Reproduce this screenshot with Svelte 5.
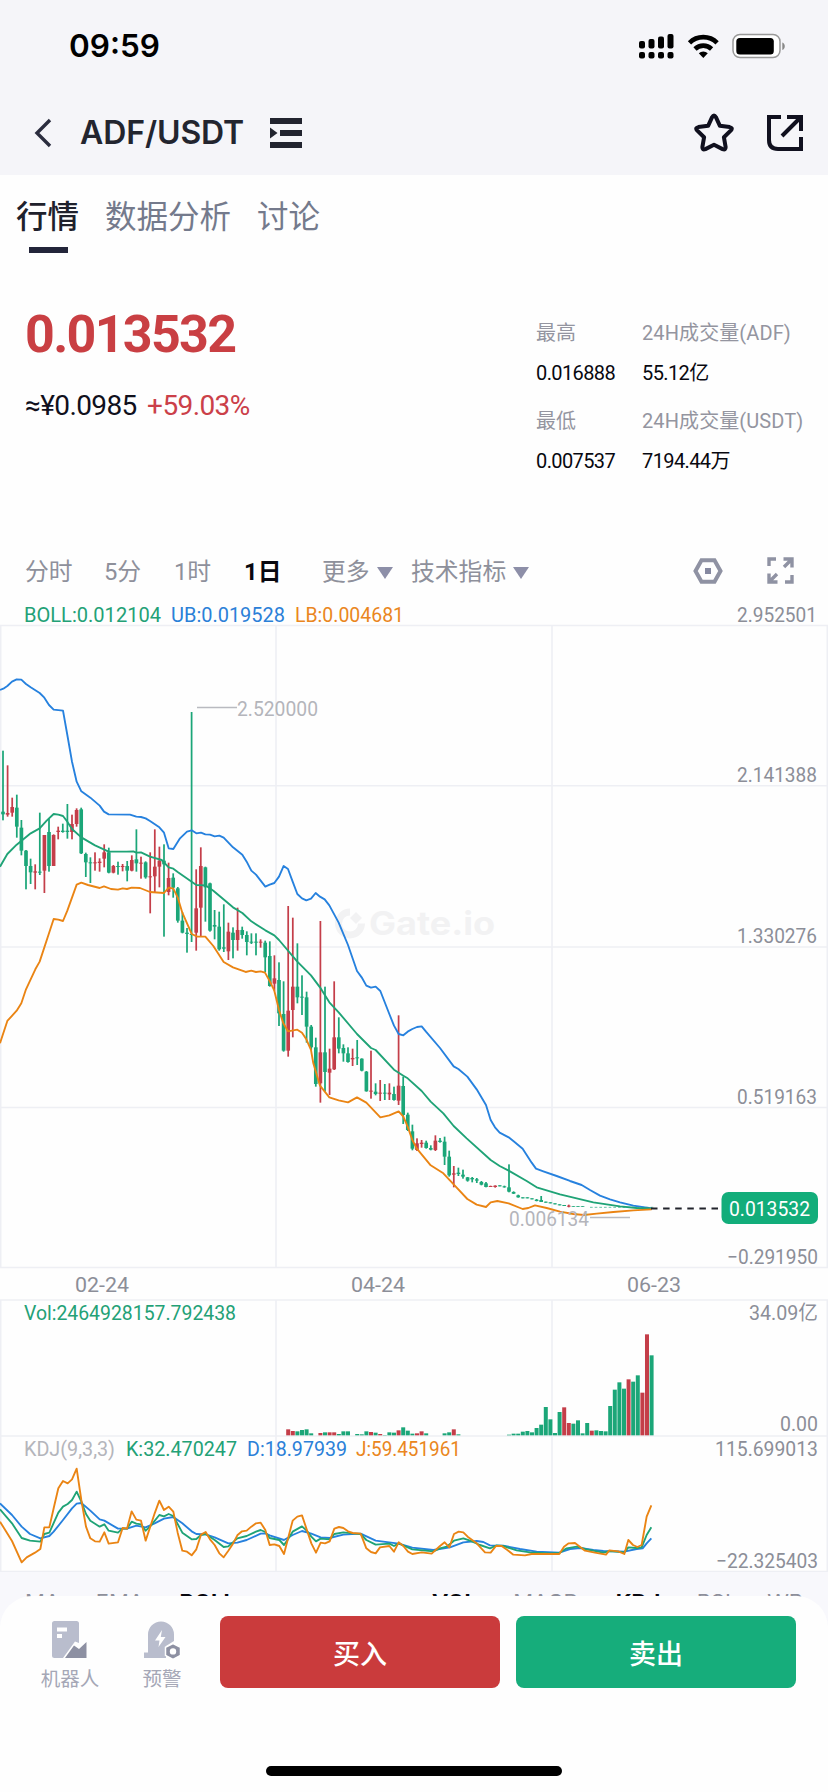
<script lang="ts">
  type Candle = [dir: string, high: number, low: number, top: number, bottom: number];

  const tabs = ['行情', '数据分析', '讨论'];
  const mainIndicators = ['MA', 'EMA', 'BOLL'];
  const subIndicators = ['VOL', 'MACD', 'KDJ', 'RSI', 'WR'];
  const active = ['BOLL', 'VOL', 'KDJ'];

  // chart units are thirds of a pixel
  const step = 13.8;
  const xAt = (i: number) => 9 + i * step;

  const rawCandles = `
    g 392 601 575 583,r 436 590 579 584,r 533 590 561 578,g 524 653 563 620,g 600 706 623 692,g 690 808 692 738,
    g 716 792 738 757,r 733 808 754 758,g 578 765 755 758,r 645 819 645 752,g 597 755 636 738,r 643 738 645 738,
    r 620 658 632 636,g 611 638 632 636,g 552 656 632 636,r 584 658 612 636,r 565 620 570 612,g 563 702 568 700,
    g 698 771 702 727,g 712 789 727 730,r 697 752 727 730,r 715 755 725 729,r 673 742 697 716,g 683 760 697 758,
    r 735 760 738 758,g 725 764 738 741,r 732 754 738 741,g 723 784 738 752,r 706 754 720 752,g 628 755 718 730,
    r 710 776 728 731,g 724 776 727 772,r 697 880 769 772,r 628 819 740 769,r 680 802 722 740,g 673 950 722 733,
    r 728 826 774 816,g 760 833 773 803,g 801 908 805 902,g 877 940 902 938,g 924 998 938 942,g 276 966 942 945,
    r 748 992 865 938,r 682 948 738 863,g 740 905 742 802,g 788 935 790 932,g 870 958 915 920,g 875 992 920 988,
    g 853 996 982 986,r 908 1020 935 994,g 922 1015 938 960,r 863 992 930 960,g 920 956 930 945,g 934 1006 945 966,
    g 940 972 965 968,g 940 1006 965 968,r 958 983 965 968,g 962 1056 968 1012,g 964 1100 1008 1098,r 1006 1112 1075 1091,
    g 1027 1218 1080 1180,g 1084 1295 1182 1292,r 858 1310 1172 1292,r 893 1252 1100 1170,g 970 1150 1100 1132,
    g 1066 1185 1130 1133,g 1115 1268 1132 1220,g 1215 1290 1220 1282,g 1253 1400 1282 1392,r 903 1448 1297 1390,
    g 1100 1415 1297 1356,r 1286 1425 1346 1358,r 1084 1350 1252 1348,g 1192 1300 1252 1286,g 1273 1325 1284 1300,
    g 1282 1328 1300 1326,r 1286 1338 1314 1318,g 1260 1335 1312 1315,g 1315 1354 1316 1352,g 1353 1415 1355 1414,
    r 1292 1436 1412 1415,g 1390 1426 1415 1422,r 1380 1443 1418 1421,g 1392 1440 1418 1421,r 1390 1440 1418 1423,
    g 1400 1442 1422 1440,r 1186 1455 1397 1442,g 1370 1512 1398 1485,g 1478 1533 1484 1530,g 1514 1591 1534 1586,
    r 1555 1593 1570 1590,r 1560 1583 1568 1572,g 1562 1586 1568 1584,g 1576 1591 1584 1589,r 1546 1593 1562 1590,
    g 1554 1568 1562 1566,g 1550 1635 1565 1610,g 1592 1670 1610 1666,r 1638 1702 1660 1664,g 1643 1668 1658 1662,
    g 1649 1676 1664 1670,g 1671 1685 1672 1682,g 1671 1687 1674 1678,g 1674 1689 1678 1682,g 1683 1696 1686 1694,
    g 1686 1702 1690 1701,r 1697 1701 1698 1701,r 1696 1703 1697 1701,g 1696 1699 1696 1699,g 1697 1703 1699 1702,
    g 1633 1717 1702 1715,g 1714 1722 1716 1721,g 1724 1733 1726 1732,g 1732 1735 1732 1735,g 1732 1735 1732 1735,
    g 1735 1738 1735 1738,g 1737 1744 1739 1743,g 1728 1746 1740 1746,g 1745 1748 1745 1748,g 1747 1750 1747 1750,
    g 1750 1753 1750 1753,g 1753 1756 1753 1756,g 1755 1758 1755 1758,r 1754 1762 1757 1760,g 1758 1760 1758 1760,
    g 1758 1760 1758 1760,g 1759 1761 1759 1761`;

  const candles = rawCandles.split(',').map((row) => {
    const [dir, ...nums] = row.trim().split(' ');
    return [dir, ...nums.map(Number)] as Candle;
  });

  const volStart = 62;
  const volumes = (
    'r18 r13 g12 g16 g18 g6 g0 r7 g9 r9 r9 g4 g12 g12 g0 g4 g3 g12 r10 g8 r4 g1 g9 g8 r15 g24 g14 g5 r6 r12 g6 ' +
    'g0 g0 g0 g6 g9 r18 g3 g0 g0 g0 g0 g0 g0 g0 g0 g0 g0 g2 g5 g5 g11 g13 g9 g22 g32 g85 g48 g7 g70 r84 r37 g35 ' +
    'g45 g6 g37 r14 g15 g13 g12 g88 g137 g159 g140 r168 g161 g180 r128 r303 g240'
  ).split(' ').map((v) => ({ dir: v[0], h: Number(v.slice(1)) }));

  const upper =
    '0,210 10,206 22,198 36,185 50,178 64,179 78,192 92,202 119,219 133,233 147,255 161,269 189,272 202,345 216,425 230,485 244,514 271,533 299,557 312,575 326,583 390,584 409,590 423,591 437,595 450,603 478,622 492,638 506,685 520,687 540,655 561,635 575,631 589,640 603,638 616,643 630,644 644,649 658,647 671,653 699,682 727,704 740,725 754,752 768,764 796,800 809,794 823,789 837,770 851,738 864,747 878,785 892,822 906,835 919,841 933,836 947,819 960,830 974,838 988,856 1016,908 1044,975 1071,1053 1085,1072 1099,1097 1113,1103 1127,1100 1141,1113 1168,1182 1182,1217 1196,1242 1210,1246 1223,1235 1237,1227 1251,1221 1265,1219 1278,1235 1320,1284 1361,1339 1375,1347 1402,1370 1430,1408 1458,1455 1472,1500 1485,1522 1499,1538 1526,1552 1540,1563 1568,1586 1595,1628 1608,1646 1630,1654 1670,1668 1710,1683 1745,1695 1770,1710 1800,1727 1830,1738 1860,1747 1900,1757 1940,1763 1955,1765';
  const middle =
    '0,740 22,702 50,674 92,640 119,625 140,602 161,582 175,584 189,588 202,605 216,627 244,652 285,676 326,695 380,695 400,694 409,698 423,697 450,710 485,720 506,742 520,746 533,756 589,795 616,796 640,812 699,862 727,879 754,904 796,931 823,946 837,960 892,1025 933,1066 960,1102 988,1147 1016,1177 1071,1242 1113,1284 1127,1290 1182,1349 1210,1367 1223,1375 1265,1413 1292,1445 1330,1480 1361,1518 1400,1555 1472,1620 1499,1638 1526,1652 1580,1683 1610,1702 1680,1723 1780,1747 1860,1759 1910,1764 1955,1765';
  const lower =
    '0,1270 22,1203 50,1172 64,1150 78,1108 106,1048 119,1025 147,940 161,897 175,899 189,903 202,872 230,794 244,788 264,795 299,804 312,799 333,807 354,809 368,805 381,807 395,803 420,804 450,816 492,819 506,803 520,806 533,832 547,878 575,942 592,950 616,950 640,978 671,1026 699,1042 737,1056 754,1052 768,1056 782,1054 795,1058 810,1085 823,1112 837,1170 850,1210 864,1234 892,1229 906,1238 919,1258 933,1290 940,1330 960,1397 988,1432 1016,1441 1044,1447 1071,1432 1099,1448 1141,1492 1168,1486 1196,1474 1210,1490 1223,1520 1237,1560 1250,1585 1292,1636 1330,1660 1361,1693 1402,1737 1430,1754 1458,1761 1472,1747 1492,1743 1526,1750 1568,1767 1585,1764 1605,1756 1640,1764 1680,1775 1720,1782 1752,1785 1790,1781 1840,1776 1900,1771 1955,1768';

  const lineJ =
    '0,695 36,753 65,817 80,802 105,788 121,777 133,712 148,712 161,655 175,595 189,573 203,580 216,568 230,536 244,630 258,710 271,745 285,754 299,755 313,727 326,761 354,757 368,714 381,716 395,664 409,689 423,692 437,752 464,670 478,632 492,660 506,650 520,665 533,728 547,782 561,785 575,796 589,778 603,734 617,726 630,748 644,765 658,790 671,802 685,782 699,761 712,736 726,724 740,722 754,710 768,700 782,698 796,720 809,765 823,763 838,768 852,792 878,692 892,680 906,676 920,718 934,760 948,788 962,758 975,760 989,754 1003,716 1017,711 1030,714 1044,724 1058,729 1082,731 1099,775 1113,786 1127,790 1140,772 1168,768 1182,785 1196,757 1210,768 1224,785 1237,792 1265,787 1295,791 1320,768 1334,757 1348,772 1362,732 1376,725 1390,727 1403,740 1428,758 1455,787 1472,788 1488,768 1505,768 1522,780 1540,794 1575,796 1595,792 1678,792 1692,770 1706,760 1725,759 1755,782 1785,788 1818,794 1828,781 1855,784 1873,792 1885,750 1899,765 1912,771 1925,765 1940,680 1954,646';
  const lineK =
    '0,658 36,700 65,744 90,752 121,755 133,732 148,728 175,668 189,650 203,642 216,630 230,605 244,635 258,672 271,692 299,710 313,703 326,722 354,728 368,715 381,716 395,695 409,701 423,703 437,722 450,710 478,675 492,679 506,672 520,678 547,728 575,748 589,747 603,735 617,732 644,750 671,771 685,769 712,745 740,738 768,725 782,720 796,726 809,744 838,750 852,765 864,748 878,725 906,709 920,722 934,740 948,754 962,746 989,748 1003,732 1030,727 1058,730 1082,732 1099,750 1127,764 1168,761 1182,768 1196,760 1237,778 1300,784 1320,775 1340,770 1362,752 1390,745 1410,752 1440,765 1470,775 1490,766 1510,768 1550,781 1590,787 1650,790 1678,789 1700,775 1730,770 1760,778 1810,788 1830,783 1873,787 1885,772 1910,774 1925,772 1940,735 1954,712';
  const lineD =
    '0,640 36,675 65,710 90,732 121,745 148,738 161,725 189,690 216,655 230,641 244,639 271,662 299,688 313,692 354,716 381,716 409,707 437,712 464,700 492,686 520,681 547,700 575,724 589,732 617,733 644,742 685,760 712,758 740,750 782,731 796,730 809,736 852,750 878,735 906,723 934,731 962,742 989,744 1030,734 1082,731 1127,752 1196,761 1237,773 1300,780 1350,772 1390,757 1430,753 1450,756 1470,766 1510,767 1560,777 1610,785 1678,788 1710,777 1740,774 1780,780 1810,783 1873,785 1910,777 1928,775 1940,760 1954,745';

  // text, left x, baseline, width, class
  const labels: [string, number, number, number, string][] = [
    ['BOLL:0.012104', 24, 621.5, 137, 'green'],
    ['UB:0.019528', 171, 621.5, 114, 'blue'],
    ['LB:0.004681', 295, 621.5, 109, 'orange'],
    ['2.952501', 737, 621.5, 80, 'axis'],
    ['2.141388', 737, 782, 80, 'axis'],
    ['1.330276', 737, 943, 80, 'axis'],
    ['0.519163', 737, 1103.5, 80, 'axis'],
    ['−0.291950', 727, 1264, 91, 'axis'],
    ['02-24', 75, 1292, 54, 'axis'],
    ['04-24', 351, 1292, 54, 'axis'],
    ['06-23', 627, 1292, 54, 'axis'],
    ['2.520000', 237, 715.5, 81, 'mark'],
    ['0.006134', 509, 1226, 80, 'mark'],
    ['Vol:2464928157.792438', 24, 1319.5, 212, 'green'],
    ['34.09亿', 749, 1319.5, 69, 'axis'],
    ['0.00', 780, 1431, 38, 'axis'],
    ['KDJ(9,3,3)', 24, 1455.5, 91, 'mark'],
    ['K:32.470247', 126, 1455.5, 111, 'green'],
    ['D:18.97939', 247, 1455.5, 100, 'blue'],
    ['J:59.451961', 356, 1455.5, 105, 'orange'],
    ['115.699013', 715, 1455.5, 103, 'axis'],
    ['−22.325403', 716, 1567.5, 102, 'axis'],
  ];
</script>

<div class="screen">
  <header>
    <div class="status">
      <span class="clock">09:59</span>
      <svg class="status-icons" viewBox="638 32 148 27">
        <g>
          <rect x="639" y="40" width="6" height="7.5" rx="2" />
          <rect x="648.5" y="38" width="6" height="9.5" rx="2" />
          <rect x="658" y="35.5" width="6" height="12" rx="2" />
          <rect x="667.5" y="33" width="6" height="14.5" rx="2" />
          {#each [639, 648.5, 658, 667.5] as x}
            <rect {x} y="51" width="6" height="6.5" rx="2" />
          {/each}
        </g>
        <g fill="none" stroke="#000" stroke-width="4.6">
          <path d="M689.5 41.8a19.5 19.5 0 0 1 27.6 0" />
          <path d="M695 48a12 12 0 0 1 16.6 0" />
        </g>
        <path d="M698.8 52.2a7 7 0 0 1 9 0l-4.5 4.8z" />
        <rect x="733" y="33.5" width="47" height="23" rx="7" fill="#fff" stroke="#999" stroke-width="1.5" />
        <rect x="736.3" y="37" width="37.5" height="16.5" rx="3.5" />
        <path d="M782.3 41.5c3.3 1 3.3 6.500 0 7.500z" fill="#888" />
      </svg>
    </div>
    <div class="nav">
      <svg class="back" width="18" height="30" viewBox="0 0 18 30">
        <path d="M16 2 3 15l13 13" fill="none" stroke="#2b2d3f" stroke-width="3.4" />
      </svg>
      <h1>ADF/USDT</h1>
      <svg class="menu" width="32" height="30" viewBox="0 0 32 30">
        <path d="M0 0h32v6H0zM10 12h22v6H10zM0 24h32v6H0zM0 9.5 7.5 15 0 20.5z" fill="#22242f" />
      </svg>
      <svg class="star" width="40" height="40" viewBox="0 0 40 40">
        <path d="M18.1 4.2q1.900-3.400 3.800 0l4 8.600 9.800 1.300q3.400.700 1.200 3.300l-7 6.800 1.700 9.600q.300 3.600-3 2.300L20 31.800l-8.600 4.300q-3.300 1.300-3-2.300l1.700-9.600-7-6.800q-2.200-2.600 1.200-3.300l9.800-1.300z" fill="none" stroke="#10101f" stroke-width="4" stroke-linejoin="round" />
      </svg>
      <svg class="share" width="36" height="36" viewBox="0 0 36 36">
        <path d="M14 2H2v23q0 9 9 9h23V22M20 2h14v14M15 21 33 3" fill="none" stroke="#10101f" stroke-width="4" />
      </svg>
    </div>
  </header>

  <nav class="tabs">
    {#each tabs as tab, i}
      <span class="tab" class:active={i === 0}>{tab}</span>
    {/each}
  </nav>

  <section class="quote">
    <div class="last">
      <div class="price">0.013532</div>
      <div class="fiat">≈¥0.0985 <span class="change">+59.03%</span></div>
    </div>
    <dl class="stats">
      <dt>最高</dt>
      <dt>24H成交量(ADF)</dt>
      <dd>0.016888</dd>
      <dd>55.12亿</dd>
      <dt>最低</dt>
      <dt>24H成交量(USDT)</dt>
      <dd>0.007537</dd>
      <dd>7194.44万</dd>
    </dl>
  </section>

  <div class="intervals">
    <span class="iv-line">分时</span>
    <span class="iv-5m">5分</span>
    <span class="iv-1h">1时</span>
    <span class="iv-1d">1日</span>
    <span class="iv-more">更多<i class="caret"></i></span>
    <span class="iv-tech">技术指标<i class="caret"></i></span>
    <svg class="hex" width="30" height="26" viewBox="0 0 30 26">
      <path d="M8.5 2.300h13L27.500 13l-6 10.700h-13L2.500 13z" fill="none" stroke="#8f92a3" stroke-width="4" />
      <path d="M12 10h6v6h-6z" fill="#8588a0" />
    </svg>
    <svg class="expand" width="27" height="27" viewBox="0 0 27 27">
      <path d="M2 9V2h7M16.500 2H25v8.500M24.500 2.500 17 10M2 16.500V25h8.500M2.500 24.500 10 17M25 18v7h-7" fill="none" stroke="#8f92a3" stroke-width="3.4" />
    </svg>
  </div>

  <svg class="chart" viewBox="0 600 828 972">
    <g class="grid">
      <path d="M0 625.5H828M0 785.7H828M0 947H828M0 1107.5H828M0 1267.5H828M0 1300H828M0 1436H828M0 1571.5H828" />
      <path d="M.7 625.5V1267.5M276 625.5V1267.5M552 625.5V1267.5M827.3 625.5V1267.5" />
      <path d="M.7 1300V1571.5M276 1300V1571.5M552 1300V1571.5M827.3 1300V1571.5" />
    </g>

    <g class="watermark">
      <path d="M350 912a11.500 11.500 0 1 0 11.500 11.500" fill="none" stroke="#f2f2f3" stroke-width="7" />
      <path d="m356 912 6 6-6 6-6-6z" />
      <text x="369" y="935" textLength="126" lengthAdjust="spacingAndGlyphs">Gate.io</text>
    </g>

    <g transform="translate(0 620) scale(0.33333)">
      {#each candles as [dir, high, low, top, bottom], i}
        <g class={dir === 'g' ? 'down' : 'up'}>
          <rect x={xAt(i) - 2.6} y={high} width="5.2" height={low - high} />
          <rect x={xAt(i) - 5.5} y={top} width="11" height={bottom - top} />
        </g>
      {/each}
      <path class="flat" d="M1770 1762H1960" />
      <polyline class="line upper" points={upper} />
      <polyline class="line middle" points={middle} />
      <polyline class="line lower" points={lower} />
    </g>

    <g transform="translate(0 1290) scale(0.33333)">
      {#each volumes as { dir, h }, i}
        <rect class={dir === 'g' ? 'down' : 'up'} x={xAt(volStart + i) - 6} y={436 - h} width="12" height={h} />
      {/each}
      <polyline class="line upper" points={lineD} />
      <polyline class="line middle" points={lineK} />
      <polyline class="line lower" points={lineJ} />
    </g>

    <path class="leader" d="M197 707.5H237M590 1217.5H630" />
    <path class="dash" d="M651 1208.5H720" />
    <rect class="tag" x="721.5" y="1192" width="96.5" height="32" rx="7" />
    <text class="tag-text" x="729" y="1215.5" textLength="81" lengthAdjust="spacingAndGlyphs">0.013532</text>

    {#each labels as [text, x, y, width, cls]}
      <text class={cls} {x} {y} textLength={width} lengthAdjust="spacingAndGlyphs">{text}</text>
    {/each}
  </svg>

  <div class="indicators">
    <div class="group main">
      {#each mainIndicators as name}
        <span class:on={active.includes(name)}>{name}</span>
      {/each}
    </div>
    <div class="group sub">
      {#each subIndicators as name}
        <span class:on={active.includes(name)}>{name}</span>
      {/each}
    </div>
  </div>

  <footer>
    <div class="actions">
      <div class="tool robot">
        <svg width="36" height="38" viewBox="0 0 36 38">
          <path d="M2.500 0h22q2.500 0 2.500 2.500V22l-4-1.500L11 37H2.500Q0 37 0 34.500v-32Q0 0 2.500 0z" fill="#b9bdcd" />
          <path d="M5 6.500h10v4H5zM5 13h5v4H5z" fill="#fff" />
          <path d="m13 37 9-12.500 5 3.500 7.500-7V37z" fill="#8d90a2" />
        </svg>
        <span>机器人</span>
      </div>
      <div class="tool alert">
        <svg width="37" height="38" viewBox="0 0 37 38">
          <path d="M4 30V13.500a13 13 0 0 1 26 0V20l-8 5v12H0v-5.500h4z" fill="#b9bdcd" />
          <path d="m18 9-7 10.500h4.500L14.500 26l7-10h-4.700z" fill="#fff" />
          <path d="m29 22.500 7.500 3.800v8L29 38.300l-7.500-4v-8z" fill="#8d90a2" stroke="#fff" stroke-width="1.5" />
          <circle cx="29" cy="30.4" r="3.2" fill="#fff" />
        </svg>
        <span>预警</span>
      </div>
      <button class="buy">买入</button>
      <button class="sell">卖出</button>
    </div>
    <div class="home"></div>
  </footer>
</div>

<style>
  :global(body) {
    background: #fff;
  }

  .screen {
    width: 828px;
    height: 1792px;
    overflow: hidden;
    display: flex;
    flex-direction: column;
    background: #fefefe;
    font-family: Roboto, "Noto Sans CJK SC", sans-serif;
    color: #10101c;
  }

  svg {
    display: block;
    flex: none;
  }

  header {
    flex: none;
    height: 175px;
    background: #f5f5f9;
  }

  .status {
    height: 92px;
    box-sizing: border-box;
    padding: 0 42px 0 69px;
    display: flex;
    align-items: center;
    justify-content: space-between;
  }

  .clock {
    font: 600 31.5px/40px Inter, sans-serif;
    color: #000;
  }

  .status-icons {
    width: 148px;
    height: 27px;
  }

  .nav {
    height: 82px;
    padding: 0 25px 0 34px;
    display: flex;
    align-items: center;
  }

  h1 {
    margin: 0 26px 0 28px;
    font: 600 32px/40px Inter, sans-serif;
    letter-spacing: -0.1px;
    color: #23252f;
  }

  .star {
    margin-left: auto;
  }

  .share {
    margin-left: 33px;
  }

  .tabs {
    flex: none;
    height: 78px;
    padding-left: 16px;
    display: flex;
    gap: 26px;
  }

  .tab {
    position: relative;
    padding-top: 20px;
    font-size: 31.5px;
    line-height: 46px;
    color: #747a8c;
  }

  .tab.active {
    font-weight: 500;
    color: #1f212c;
  }

  .tab.active::after {
    content: '';
    position: absolute;
    left: 13px;
    bottom: 0;
    width: 39px;
    height: 6px;
    background: #23253a;
  }

  .quote {
    flex: none;
    height: 288px;
    padding: 0 0 0 25px;
    display: flex;
    justify-content: space-between;
  }

  .price {
    margin-top: 51px;
    font-size: 52px;
    line-height: 62px;
    font-weight: 700;
    letter-spacing: -1.7px;
    color: #c93f43;
  }

  .fiat {
    margin-top: 22px;
    font-size: 28px;
    line-height: 36px;
    letter-spacing: -0.6px;
    word-spacing: 4px;
  }

  .change {
    color: #cb4049;
  }

  .stats {
    width: 292px;
    height: 170px;
    margin: 60px 0 0;
    display: grid;
    grid-template-columns: 106px 1fr;
    grid-template-rows: 40px 48px 40px 40px;
  }

  dt,
  dd {
    margin: 0;
    font-size: 20px;
    line-height: 40px;
    white-space: nowrap;
  }

  dt {
    letter-spacing: 0.1px;
    color: #9495a0;
  }

  dd {
    letter-spacing: -0.6px;
    color: #08080f;
  }

  .intervals {
    flex: none;
    height: 59px;
    padding: 0 34px 0 25px;
    display: flex;
    align-items: center;
    font-size: 23.8px;
    line-height: 34px;
    color: #8e909b;
  }

  .intervals span {
    flex: none;
    padding-top: 2px;
    display: flex;
    align-items: center;
    white-space: nowrap;
  }

  .iv-line { width: 79px; }
  .iv-5m { width: 70px; }
  .iv-1h { width: 70px; }
  .iv-more { width: 89px; }

  .intervals .iv-1d {
    width: 78px;
    font-weight: 700;
    color: #08080f;
  }

  .caret {
    margin: 3px 0 0 7px;
    border: 8.5px solid transparent;
    border-top: 12px solid #8d8fa8;
    border-bottom: 0;
  }

  .hex {
    margin-left: auto;
  }

  .expand {
    margin-left: 44px;
  }

  .chart {
    width: 828px;
    height: 972px;
    font-size: 20.3px;
  }

  .grid {
    fill: none;
    stroke: #eeeff4;
    stroke-width: 1.6;
  }

  .watermark {
    fill: #f2f2f3;
    font: 700 32px Inter, sans-serif;
  }

  .up { fill: #c43e49; }
  .down { fill: #1ba678; }

  .flat {
    fill: none;
    stroke: #1ba678;
    stroke-width: 2;
    stroke-dasharray: 8 6;
  }

  .line {
    fill: none;
    stroke-width: 5.6;
    stroke-linejoin: round;
  }

  .upper { stroke: #2681de; }
  .middle { stroke: #1fa376; }
  .lower { stroke: #ea8413; }

  .leader {
    stroke: #b9bac0;
    stroke-width: 1.5;
  }

  .dash {
    stroke: #22242c;
    stroke-width: 1.8;
    stroke-dasharray: 6.5 5.6;
  }

  .tag { fill: #12ad7a; }
  .tag-text { fill: #fff; }
  .green { fill: #23a176; }
  .blue { fill: #2b80d8; }
  .orange { fill: #ea8620; }
  .axis { fill: #8c8e98; }
  .mark { fill: #b4b5bb; }

  .indicators {
    flex: none;
    height: 62px;
    box-sizing: border-box;
    padding: 16px 25px 0 25px;
    display: flex;
    justify-content: space-between;
    background: #f8f8fc;
    font: 400 22px/28px Inter, sans-serif;
    color: #8e909b;
  }

  .group {
    display: flex;
    justify-content: space-between;
  }

  .main { width: 211px; }
  .sub { width: 371px; }

  .on {
    font-weight: 700;
    color: #08080f;
  }

  footer {
    position: relative;
    flex: 1;
    margin-top: -38px;
    border-radius: 32px 32px 0 0;
    background: #fefefe;
  }

  .actions {
    height: 72px;
    padding: 20px 32px 0 40px;
    display: flex;
  }

  .tool {
    padding-top: 5px;
    display: flex;
    flex-direction: column;
    align-items: center;
    gap: 7px;
    font-size: 19.5px;
    line-height: 28px;
    color: #a5a7b6;
    white-space: nowrap;
  }

  .robot {
    width: 60px;
  }

  .alert {
    width: 40px;
    margin: 0 38px 0 42px;
  }

  button {
    flex: 1;
    height: 72px;
    border: 0;
    border-radius: 8px;
    font: 500 27px "Noto Sans CJK SC", sans-serif;
    color: #fff;
  }

  .buy { background: #ca3b3c; }

  .sell {
    margin-left: 16px;
    background: #16ad7b;
  }

  .home {
    width: 296px;
    height: 10px;
    margin: 78px auto 0;
    border-radius: 5px;
    background: #000;
  }
</style>
